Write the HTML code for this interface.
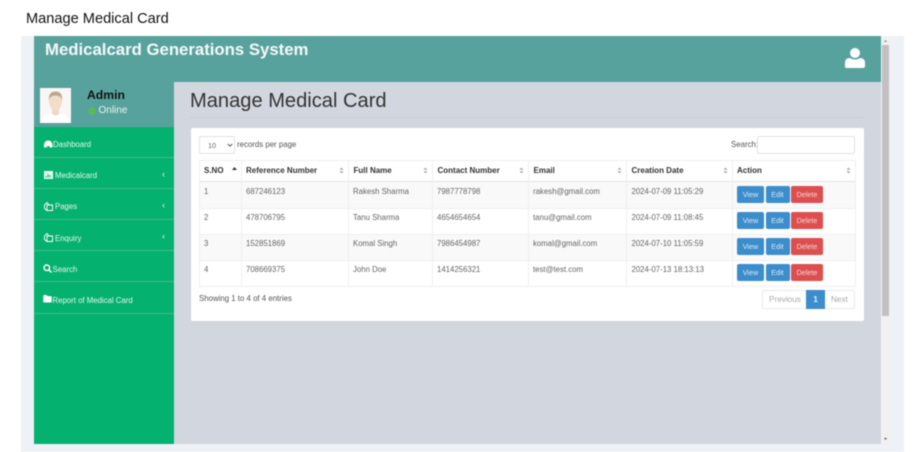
<!DOCTYPE html>
<html><head><meta charset="utf-8"><title>Manage Medical Card</title>
<style>
html,body{margin:0;padding:0;background:#fff;width:915px;height:452px;overflow:hidden}
*{box-sizing:border-box}
body{font-family:"Liberation Sans",sans-serif;position:relative}
.a{position:absolute;white-space:nowrap}
#wrap{filter:blur(.45px);position:absolute;left:0;top:0;width:915px;height:452px}
.nav{position:absolute;left:34px;width:140px;height:31px;border-bottom:1.5px solid #3fbd8c;color:#e2f6ed;font-size:7.8px;line-height:12px}
.nav span{position:absolute;top:11px;white-space:nowrap;margin-top:1px}
.nav svg{position:absolute}
.nav i{position:absolute;left:128px;top:9.5px;font-style:normal;font-size:9px}
.th{position:absolute;top:160px;height:21px;font-size:8px;font-weight:bold;color:#333;line-height:22px}
.c{position:absolute;font-size:7.8px;color:#666;white-space:nowrap;margin-top:1px}
.v{position:absolute;width:1px;background:#efefef;top:160px;height:126px}
.h{position:absolute;left:199px;width:657px;height:1px;background:#efefef}
.s{position:absolute;top:166px;width:5px;height:9px}
.b{position:absolute;height:17px;border-radius:2px;color:#dbe9f6;font-size:7.2px;line-height:17px;text-align:center}
</style></head><body>
<div id="wrap">
<div class="a" style="left:26px;top:11px;font-size:14.6px;color:#111;line-height:17px">Manage Medical Card</div>
<div class="a" style="left:21px;top:36px;width:883px;height:416px;background:#eef1f5"></div>
<div class="a" style="left:34px;top:36px;width:847px;height:408px;background:#d2d6de"></div>
<div class="a" style="left:881px;top:36px;width:9px;height:408px;background:#f1f1f1"></div>
<div class="a" style="left:882px;top:45px;width:7px;height:271px;background:#c1c1c1"></div>
<svg class="a" style="left:881px;top:38px" width="9" height="6"><path d="M3 4L4.5 2L6 4Z" fill="#888"/></svg>
<svg class="a" style="left:881px;top:436px" width="9" height="6"><path d="M3 2L4.5 4L6 2Z" fill="#555"/></svg>
<div class="a" style="left:34px;top:36px;width:847px;height:46px;background:#58a29e"></div>
<div class="a" style="left:45px;top:40px;font-size:16.75px;font-weight:bold;color:#f4f9f8;line-height:20px">Medicalcard Generations System</div>
<svg class="a" style="left:845px;top:47px" width="20" height="22" viewBox="0 0 20 22"><circle cx="10" cy="6" r="5" fill="#fff"/><path d="M1 21Q0 21 0 19V16Q0 11 5 11Q7 12.500 10 12.500Q13 12.500 15 11Q20 11 20 16V19Q20 21 18 21Z" fill="#fff"/></svg>

<div class="a" style="left:34px;top:82px;width:140px;height:45px;background:#58a29e"></div>
<svg class="a" style="left:40px;top:88px" width="31" height="35" viewBox="0 0 31 35"><rect width="31" height="35" fill="#f8f7f5"/><path d="M2 35V31Q3 27 11 25.500L20 25.500Q28 27 29 31V35Z" fill="#fff"/><path d="M12 20H19V26Q15.500 29 12 26Z" fill="#efd9c6"/><ellipse cx="15.500" cy="13.500" rx="6.300" ry="9" fill="#f3dcc8"/><path d="M9 13Q8 3.500 15.500 3.500Q23 3.500 22 13Q21.500 7.500 15.500 7.500Q9.500 7.500 9 13Z" fill="#bba78f"/></svg>
<div class="a" style="left:87px;top:87.500px;font-size:12.2px;font-weight:bold;color:#111;line-height:15px">Admin</div>
<div class="a" style="left:88px;top:107px;width:8px;height:8px;border-radius:50%;background:#5cb85c"></div>
<div class="a" style="left:98.500px;top:104px;font-size:10px;color:#e8f4f2;line-height:14px">Online</div>

<div class="a" style="left:34px;top:127px;width:140px;height:317px;background:#05b16f"></div>
<div class="nav" style="top:127px"><svg style="left:10px;top:13px" width="8.500" height="7.500" viewBox="0 0 9 8"><path d="M0 8V5A4.500 4.500 0 0 1 9 5V8H6V6.500H3V8Z" fill="#fff"/></svg><span style="left:19px;top:11px">Dashboard</span></div>
<div class="nav" style="top:158px"><svg style="left:9.500px;top:13px" width="9" height="8" viewBox="0 0 9 8"><path d="M0 0H9V8H0Z" fill="#e9f8f1"/><path d="M1.500 6.500V5H2.500V6.500ZM3.500 6.500V3H4.500V6.500ZM5.500 6.500V4H6.500V6.500Z" fill="#05b16f"/></svg><span style="left:21px;top:11px">Medicalcard</span><i>&#8249;</i></div>
<div class="nav" style="top:189px"><svg style="left:9.500px;top:12.500px" width="9" height="9" viewBox="0 0 9 9" fill="none" stroke="#fff" stroke-width=".9"><path d="M3 3H8.500V8.500H3Z"/><path d="M5 3L3 .5L.5 3V6.500L3 8.500"/></svg><span style="left:21px;top:11px">Pages</span><i>&#8249;</i></div>
<div class="nav" style="top:220px"><svg style="left:9.500px;top:13px" width="9" height="9" viewBox="0 0 9 9" fill="none" stroke="#fff" stroke-width=".9"><path d="M3 3H8.500V8.500H3Z"/><path d="M5 3L3 .5L.5 3V6.500L3 8.500"/></svg><span style="left:21px;top:11.500px">Enquiry</span><i>&#8249;</i></div>
<div class="nav" style="top:251px"><svg style="left:8.500px;top:13px" width="9" height="9" viewBox="0 0 9 9" fill="none" stroke="#fff" stroke-width="1.400"><circle cx="3.800" cy="3.800" r="2.800"/><path d="M6 6L8.500 8.500"/></svg><span style="left:18.500px;top:11.500px">Search</span></div>
<div class="nav" style="top:282px;height:32px"><svg style="left:8.500px;top:13px" width="9" height="7.500" viewBox="0 0 9 8"><path d="M0 1Q0 0 1 0H3.500L4.500 1.200H8Q9 1.200 9 2V7Q9 8 8 8H1Q0 8 0 7Z" fill="#fff"/></svg><span style="left:18.500px;top:11.500px">Report of Medical Card</span></div>

<div class="a" style="left:190px;top:90px;font-size:20.1px;color:#333;line-height:23px">Manage Medical Card</div>
<div class="a" style="left:190px;top:116.500px;width:674px;height:1px;background:#c9ced6"></div>
<div class="a" style="left:190.500px;top:128px;width:673px;height:193px;background:#fff;border-radius:2px"></div>

<div class="a" style="left:199px;top:136px;width:36px;height:18px;border:1px solid #e2e2e2;border-radius:2px;background:#fff"></div>
<div class="a" style="left:208px;top:141px;font-size:7.2px;color:#666;line-height:10px">10</div>
<svg class="a" style="left:227px;top:143px" width="6" height="5"><path d="M.8 1L3 3.200L5.200 1" fill="none" stroke="#555" stroke-width="1"/></svg>
<div class="a" style="left:237px;top:139px;font-size:7.85px;color:#555;line-height:11px">records per page</div>
<div class="a" style="left:731px;top:139px;font-size:7.85px;color:#555;line-height:11px">Search:</div>
<div class="a" style="left:757px;top:136px;width:98px;height:18px;border:1px solid #e2e2e2;border-radius:2px;background:#fff"></div>

<div class="a" style="left:199px;top:181px;width:657px;height:27px;background:#f9f9f9"></div>
<div class="a" style="left:199px;top:233.500px;width:657px;height:26px;background:#f9f9f9"></div>
<div class="h" style="top:160px"></div>
<div class="h" style="top:180.500px;height:1.500px;background:#e2e2e2"></div>
<div class="h" style="top:207.500px"></div><div class="h" style="top:233.500px"></div><div class="h" style="top:259.500px"></div><div class="h" style="top:285.500px"></div>
<div class="v" style="left:199px"></div><div class="v" style="left:241px"></div><div class="v" style="left:348px"></div><div class="v" style="left:432px"></div><div class="v" style="left:528px"></div><div class="v" style="left:626px"></div><div class="v" style="left:732px"></div><div class="v" style="left:855px"></div>

<div class="th" style="left:204px">S.NO</div><div class="th" style="left:246px">Reference Number</div><div class="th" style="left:353.500px">Full Name</div><div class="th" style="left:437.500px">Contact Number</div><div class="th" style="left:533.500px">Email</div><div class="th" style="left:631.500px">Creation Date</div><div class="th" style="left:737px">Action</div>
<svg class="s" style="left:232px" viewBox="0 0 5 9"><path d="M0 4L2.500 1L5 4Z" fill="#333"/></svg>
<svg class="s" style="left:339px" viewBox="0 0 5 9"><path d="M.5 3.800L2.500 1.500L4.500 3.800ZM.5 5.200L2.500 7.500L4.500 5.200Z" fill="#aaa"/></svg>
<svg class="s" style="left:423px" viewBox="0 0 5 9"><path d="M.5 3.800L2.500 1.500L4.500 3.800ZM.5 5.200L2.500 7.500L4.500 5.200Z" fill="#aaa"/></svg>
<svg class="s" style="left:519px" viewBox="0 0 5 9"><path d="M.5 3.800L2.500 1.500L4.500 3.800ZM.5 5.200L2.500 7.500L4.500 5.200Z" fill="#aaa"/></svg>
<svg class="s" style="left:617px" viewBox="0 0 5 9"><path d="M.5 3.800L2.500 1.500L4.500 3.800ZM.5 5.200L2.500 7.500L4.500 5.200Z" fill="#aaa"/></svg>
<svg class="s" style="left:723px" viewBox="0 0 5 9"><path d="M.5 3.800L2.500 1.500L4.500 3.800ZM.5 5.200L2.500 7.500L4.500 5.200Z" fill="#aaa"/></svg>
<svg class="s" style="left:846px" viewBox="0 0 5 9"><path d="M.5 3.800L2.500 1.500L4.500 3.800ZM.5 5.200L2.500 7.500L4.500 5.200Z" fill="#aaa"/></svg>

<div class="c" style="left:204px;top:186px">1</div><div class="c" style="left:246px;top:186px">687246123</div><div class="c" style="left:353px;top:186px">Rakesh Sharma</div><div class="c" style="left:437px;top:186px">7987778798</div><div class="c" style="left:533px;top:186px">rakesh@gmail.com</div><div class="c" style="left:631.500px;top:186px">2024-07-09 11:05:29</div>
<div class="c" style="left:204px;top:212px">2</div><div class="c" style="left:246px;top:212px">478706795</div><div class="c" style="left:353px;top:212px">Tanu Sharma</div><div class="c" style="left:437px;top:212px">4654654654</div><div class="c" style="left:533px;top:212px">tanu@gmail.com</div><div class="c" style="left:631.500px;top:212px">2024-07-09 11:08:45</div>
<div class="c" style="left:204px;top:238px">3</div><div class="c" style="left:246px;top:238px">152851869</div><div class="c" style="left:353px;top:238px">Komal Singh</div><div class="c" style="left:437px;top:238px">7986454987</div><div class="c" style="left:533px;top:238px">komal@gmail.com</div><div class="c" style="left:631.500px;top:238px">2024-07-10 11:05:59</div>
<div class="c" style="left:204px;top:264px">4</div><div class="c" style="left:246px;top:264px">708669375</div><div class="c" style="left:353px;top:264px">John Doe</div><div class="c" style="left:437px;top:264px">1414256321</div><div class="c" style="left:533px;top:264px">test@test.com</div><div class="c" style="left:631.500px;top:264px">2024-07-13 18:13:13</div>

<div class="b" style="left:737px;top:186px;width:27px;background:#3c8dcc">View</div><div class="b" style="left:765.500px;top:186px;width:24px;background:#3c8dcc">Edit</div><div class="b" style="left:791px;top:186px;width:32px;background:#dd4f4f;color:#f6d5d5">Delete</div>
<div class="b" style="left:737px;top:212px;width:27px;background:#3c8dcc">View</div><div class="b" style="left:765.500px;top:212px;width:24px;background:#3c8dcc">Edit</div><div class="b" style="left:791px;top:212px;width:32px;background:#dd4f4f;color:#f6d5d5">Delete</div>
<div class="b" style="left:737px;top:238px;width:27px;background:#3c8dcc">View</div><div class="b" style="left:765.500px;top:238px;width:24px;background:#3c8dcc">Edit</div><div class="b" style="left:791px;top:238px;width:32px;background:#dd4f4f;color:#f6d5d5">Delete</div>
<div class="b" style="left:737px;top:264px;width:27px;background:#3c8dcc">View</div><div class="b" style="left:765.500px;top:264px;width:24px;background:#3c8dcc">Edit</div><div class="b" style="left:791px;top:264px;width:32px;background:#dd4f4f;color:#f6d5d5">Delete</div>

<div class="a" style="left:199px;top:293px;font-size:7.85px;color:#555;line-height:11px">Showing 1 to 4 of 4 entries</div>
<div class="a" style="left:762px;top:290px;width:93px;height:19px;border:1px solid #eaeaea;border-radius:2px"></div>
<div class="a" style="left:769px;top:294px;font-size:8.2px;color:#aaa;line-height:11px">Previous</div>
<div class="a" style="left:806px;top:290px;width:19px;height:19px;background:#3c8dcc;color:#e8f2fa;font-size:8.2px;font-weight:bold;text-align:center;line-height:19px">1</div>
<div class="a" style="left:831px;top:294px;font-size:8.2px;color:#aaa;line-height:11px">Next</div>
</div>
</body></html>
